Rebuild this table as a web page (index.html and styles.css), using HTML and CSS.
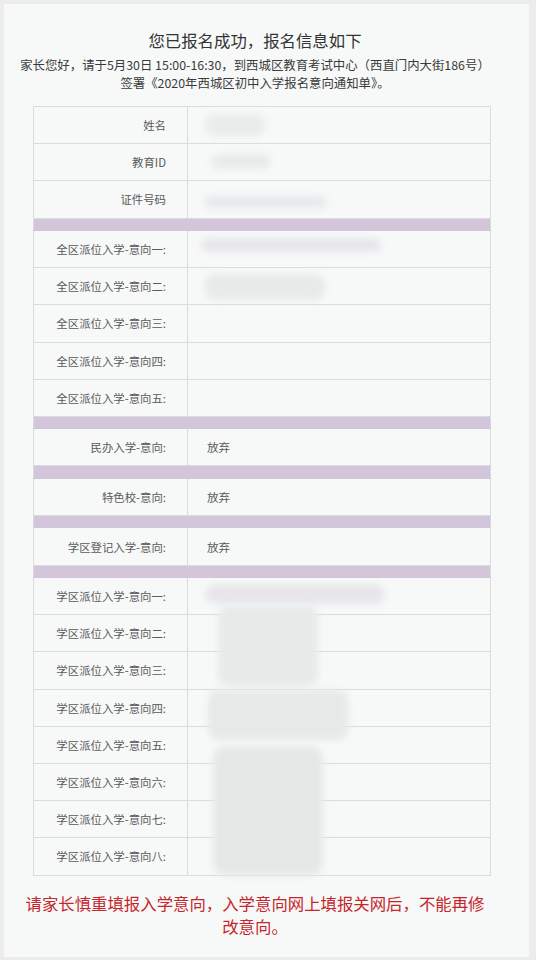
FILE: index.html
```html
<!DOCTYPE html>
<html lang="zh-CN">
<head>
<meta charset="utf-8">
<title>报名信息</title>
<link rel="stylesheet" href="styles.css">
</head>
<body>
<div class="card">
  <div class="head">
    <h1 class="title">您已报名成功，报名信息如下</h1>
    <p class="intro">家长您好，请于5月30日 15:00-16:30，到西城区教育考试中心（西直门内大街186号）签署《2020年西城区初中入学报名意向通知单》。</p>
  </div>
  <div class="table-wrap">
    <table class="info">
      <tr class="row"><td class="label">姓名</td><td class="value"></td></tr>
      <tr class="row"><td class="label">教育ID</td><td class="value"></td></tr>
      <tr class="row"><td class="label">证件号码</td><td class="value"></td></tr>
      <tr class="sep"><td colspan="2"></td></tr>
      <tr class="row"><td class="label">全区派位入学-意向一:</td><td class="value"></td></tr>
      <tr class="row"><td class="label">全区派位入学-意向二:</td><td class="value"></td></tr>
      <tr class="row"><td class="label">全区派位入学-意向三:</td><td class="value"></td></tr>
      <tr class="row"><td class="label">全区派位入学-意向四:</td><td class="value"></td></tr>
      <tr class="row"><td class="label">全区派位入学-意向五:</td><td class="value"></td></tr>
      <tr class="sep"><td colspan="2"></td></tr>
      <tr class="row"><td class="label">民办入学-意向:</td><td class="value">放弃</td></tr>
      <tr class="sep"><td colspan="2"></td></tr>
      <tr class="row"><td class="label">特色校-意向:</td><td class="value">放弃</td></tr>
      <tr class="sep"><td colspan="2"></td></tr>
      <tr class="row"><td class="label">学区登记入学-意向:</td><td class="value">放弃</td></tr>
      <tr class="sep"><td colspan="2"></td></tr>
      <tr class="row"><td class="label">学区派位入学-意向一:</td><td class="value"></td></tr>
      <tr class="row"><td class="label">学区派位入学-意向二:</td><td class="value"></td></tr>
      <tr class="row"><td class="label">学区派位入学-意向三:</td><td class="value"></td></tr>
      <tr class="row"><td class="label">学区派位入学-意向四:</td><td class="value"></td></tr>
      <tr class="row"><td class="label">学区派位入学-意向五:</td><td class="value"></td></tr>
      <tr class="row"><td class="label">学区派位入学-意向六:</td><td class="value"></td></tr>
      <tr class="row"><td class="label">学区派位入学-意向七:</td><td class="value"></td></tr>
      <tr class="row"><td class="label">学区派位入学-意向八:</td><td class="value"></td></tr>
    </table>
    <div class="blur b-name"></div>
    <div class="blur b-id"></div>
    <div class="blur b-card"></div>
    <div class="blur b-q1"></div>
    <div class="blur b-q2"></div>
    <div class="blur b-x1"></div>
    <div class="blur b-x2"></div>
    <div class="blur b-x3"></div>
    <div class="blur b-x4"></div>
  </div>
  <p class="warn">请家长慎重填报入学意向，入学意向网上填报关网后，不能再修改意向。</p>
</div>
</body>
</html>
```

FILE: styles.css
```css
* { box-sizing: border-box; }
html, body { margin: 0; padding: 0; }
body {
  background: #ececec;
  font-family: "Noto Sans CJK SC", "Noto Sans", sans-serif;
  color: #333;
}
.card {
  margin: 4px 7px 3px 4px;
  height: 953px;
  background: #f6f9f8;
  padding: 24px 39px 0 29px;
}
.head {
  margin-left: -13px;
  text-align: center;
}
.title {
  margin: 0;
  font-size: 16.4px;
  line-height: 24px;
  font-weight: normal;
  color: #333;
}
.intro {
  margin: 4px 0 0;
  font-size: 12.4px;
  line-height: 18px;
  color: #3a3a3a;
}
.table-wrap {
  position: relative;
  margin-top: 14px;
}
.info {
  width: 458px;
  border-collapse: collapse;
  table-layout: fixed;
}
.info td {
  border: 1px solid #dadcdc;
  padding: 0;
}
.row { height: 37.2px; }
.label {
  width: 154px;
  text-align: right;
  padding-right: 21px !important;
  font-size: 11.4px;
  color: #5a5a5a;
}
.value {
  padding-left: 19px !important;
  font-size: 11.6px;
  color: #5a5a5a;
}
.sep { height: 12.4px; }
.sep td { background: #d4c6da; border-color: #d4c6da #dadcdc; }
.blur {
  position: absolute;
  background: #e6e8e8;
  filter: blur(3px);
  border-radius: 10px;
}
.b-name { left: 172px; top: 8px; width: 60px; height: 22px; background: #eaecec; }
.b-id { left: 178px; top: 48px; width: 60px; height: 15px; background: #e9ebeb; }
.b-card { left: 172px; top: 90px; width: 122px; height: 12px; background: #e8e9eb; }
.b-q1 { left: 168px; top: 132px; width: 180px; height: 14px; background: #e9e6eb; }
.b-q2 { left: 172px; top: 168px; width: 120px; height: 26px; background: #e8eaea; }
.b-x1 { left: 172px; top: 478px; width: 180px; height: 20px; background: #e9e6eb; }
.b-x2 { left: 185px; top: 500px; width: 100px; height: 80px; background: #e8eaea; }
.b-x3 { left: 175px; top: 584px; width: 140px; height: 50px; background: #e7e9e9; }
.b-x4 { left: 180px; top: 640px; width: 110px; height: 130px; background: #e6e8e8; border-radius: 14px; }
.warn {
  margin: 16px 0 0 -13px;
  text-align: center;
  font-size: 16.4px;
  line-height: 23px;
  color: #c7252c;
}
```
